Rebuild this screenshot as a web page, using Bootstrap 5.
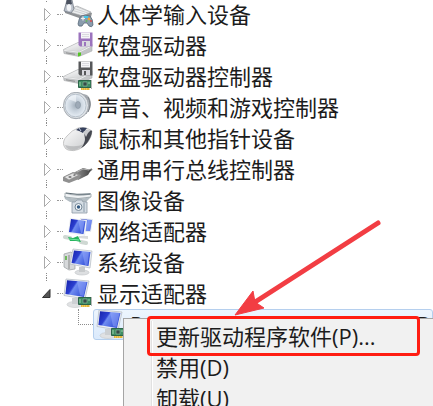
<!DOCTYPE html>
<html lang="zh-CN">
<head>
<meta charset="utf-8">
<meta name="viewport" content="width=device-width, initial-scale=1">
<title>设备管理器</title>
<link href="https://cdn.jsdelivr.net/npm/bootstrap@5.3.0/dist/css/bootstrap.min.css" rel="stylesheet">
<style>
  body { font-family: "Open Sans", "Noto Sans CJK SC", sans-serif; font-size: 22px; line-height: 31px; color: #1c1c1c; background: #fff; }
  .device-tree { margin-top: -1px; padding-left: 40px; }
  .tree-row { height: 31px; white-space: nowrap; }
  .toggle { width: 14px; height: 31px; border: 0; padding: 0; background: none; }
  .toggle::before, .toggle::after { content: ""; width: 0; border-left: 1px dotted #8c8c8c; margin-left: 6px; }
  .toggle::before { height: 3px; }
  .toggle::after { height: 5px; }
  .toggle.last-toggle::after { visibility: hidden; }
  .stub { width: 6px; margin-left: 3px; border-top: 1px dotted #9a9a9a; }
  .device-icon { width: 31px; height: 31px; overflow: visible; }
  .tree-label { margin-left: 3px; padding-bottom: 1px; }
  .elbow { width: 15px; height: 16px; margin-left: 38px; border-left: 1px dotted #8c8c8c; border-bottom: 1px dotted #8c8c8c; }
  .selected-device { border: 1px solid #b5cfee; border-radius: 3px; background: linear-gradient(#edf5fd, #dbeafc); line-height: 29px; padding-left: 2px; height: 31px; }
  .context-menu { left: 123px; right: 0; top: 318px; bottom: 0; background: #f1f1f1; border-left: 1px solid #a5a5a5; border-top: 1px solid #a5a5a5; padding: 2px 0 0 27px; }
  .menu-items { border-left: 1px solid #e1e1e1; box-shadow: inset 1px 0 #fff; }
  .menu-entry { border: 0; background: none; color: #1c1c1c; padding: 0 0 0 4px; line-height: 31px; text-align: left; white-space: nowrap; }
  .highlight-frame { left: 147px; right: 13px; top: 316px; height: 40px; border: 3px solid #ff1d12; border-radius: 4px; pointer-events: none; }
  .pointer-arrow { left: 230px; top: 215px; pointer-events: none; }
</style>
<script src="https://cdn.jsdelivr.net/npm/bootstrap@5.3.0/dist/js/bootstrap.bundle.min.js"></script>
</head>
<body class="vh-100 overflow-hidden position-relative">
<svg width="0" height="0" class="position-absolute" aria-hidden="true">
  <defs>
    <linearGradient id="screen" x1="0" y1="0" x2="1" y2=".5"><stop offset="0" stop-color="#1420a8"/><stop offset=".42" stop-color="#2b3fd0"/><stop offset=".5" stop-color="#6f8cf0"/><stop offset="1" stop-color="#3450d8"/></linearGradient>
    <linearGradient id="metal" x1="0" y1="0" x2="1" y2="1"><stop offset="0" stop-color="#fff"/><stop offset="1" stop-color="#c4c6c8"/></linearGradient>
    <linearGradient id="dark" x1="0" y1="0" x2="1" y2="0"><stop offset="0" stop-color="#9b9b9b"/><stop offset="1" stop-color="#444"/></linearGradient>
    <radialGradient id="cone"><stop offset="0" stop-color="#a3afbc"/><stop offset=".5" stop-color="#c9d3dd"/><stop offset="1" stop-color="#e6edf4"/></radialGradient>
    <symbol id="triangle" viewBox="0 0 14 16"><path d="M4.500 2.500v12l6-6z" fill="#fff" stroke="#ababab"/></symbol>
    <symbol id="triangle-open" viewBox="0 0 14 16"><path d="M10 4.500v8H2.500z" fill="#555" stroke="#333"/></symbol>
    <symbol id="board" viewBox="0 0 14 11"><path d="M3 7h8.500v3H3z" fill="#e3b63a"/><path d="M4.500 7v3m2-3v3m2-3v3" stroke="#f4d777" stroke-width=".6"/><path d="M.5.500h12.500v7H.5z" fill="#3f8c63" stroke="#2c6549"/><path d="M5 2h4v4H5z" fill="#344c47" stroke="#8ec1a1" stroke-width=".6"/><path d="M2 2v4m9-4v2" stroke="#9ed5ad"/><path d="M13.500 0v9" stroke="#b8b8b8"/></symbol>
    <symbol id="drive" viewBox="0 0 30 15"><path d="M.5 7.500 15 .5 29 2v7L16 14.500 1 11.500z" fill="#c3c5c7" stroke="#a9abad" stroke-width=".6"/><path d="M1 7.500 15 1 28.500 2.500 16 9.500z" fill="url(#metal)"/><path d="M1 8.300 16 10.300 28.500 4" fill="none" stroke="#f6f6f6" stroke-width=".8"/><path d="M3 10.800 12 12.300" stroke="#858585" stroke-width=".8"/></symbol>
    <symbol id="floppy" viewBox="0 0 15 15"><path d="M.5.500h14v14H2L.5 13z" fill="currentColor"/><path d="M3 .5h9v6H3z" fill="#f5f5f7"/><path d="M4 2.500h7M4 4.500h7" stroke="#cfcfd4" stroke-width=".7"/><path d="M4 9h8v5.500H4z" fill="#d9d9df"/><path d="M6 10h2v4H6z" fill="currentColor"/></symbol>
    <symbol id="display" viewBox="0 0 31 31"><ellipse cx="12" cy="26.500" rx="8" ry="3" fill="#e0e1e3" stroke="#c5c7c9" stroke-width=".6"/><path d="M9 20h7l1 6H9z" fill="#cdd0d3"/><path d="M3 1 26 3 22 21 1 17.500z" fill="#eef0f3" stroke="#b8bfc7" stroke-width=".8"/><path d="M4 2.300 24.500 4 21 19 2.400 16z" fill="url(#screen)"/><path d="M14 3.200 23.500 4 20.500 18 17 17.300z" fill="#9db1ff" opacity=".45"/></symbol>
    <symbol id="hid" viewBox="0 0 31 31"><path d="M2 12 14 7 29 14 28 18 19 20 2 14z" fill="#8f9295"/><path d="M3 12 14 7 28 13 20 17z" fill="#eceeef" stroke="#a3a5a8" stroke-width=".6"/><path d="M8 11 22 15M11 9.500 25 14M14 8 27 13" stroke="#b9bbbe" stroke-width=".6"/><path d="M4 1h5l2 9-3 4-7-2z" fill="#bcc2cb" stroke="#747b87" stroke-width=".8"/><path d="M4 0h4l1 5-3 1-3-1z" fill="#4b5260"/><ellipse cx="6" cy="8.500" rx="2.200" ry="3.500" fill="#f3f5f8"/><path d="M18 17q4-2 9 0 3 3 3 9-1 3-4 1l-2-3h-3l-2 3q-4 1-4-2 1-6 3-8z" fill="#8a9cad" stroke="#5a6978" stroke-width=".8"/><path d="M18 19.500h4m-2-2v4" stroke="#eee" stroke-width="1.200"/><circle cx="26" cy="20" r="1.300" fill="#f0a337"/><circle cx="28" cy="22" r="1" fill="#d84a48"/><path d="M21 17h4v2h-4z" fill="#41c7e8"/><circle cx="23.500" cy="22" r="1" fill="#67b85d"/></symbol>
    <symbol id="floppy-drive" viewBox="0 0 31 31"><use href="#drive" x="0" y="12" width="30" height="15"/><use href="#floppy" x="15" y="2" width="15" height="15" color="#9b73bd"/><path d="M15 22.500h3v3L15 26.500z" fill="#54c424"/></symbol>
    <symbol id="floppy-controller" viewBox="0 0 31 31"><use href="#drive" x="0" y="8" width="30" height="15"/><use href="#floppy" x="15" y="0" width="15" height="15" color="#57585a"/><use href="#board" x="15" y="19" width="14" height="11"/></symbol>
    <symbol id="speaker" viewBox="0 0 31 31"><path d="M14 0 24 3q4 3 4 10-1 7-6 9L16 27z" fill="#a6abb0"/><path d="M22 4q5 7 1 18M25 5q4 7 0 15" fill="none" stroke="#7b8086"/><ellipse cx="13" cy="13.500" rx="12.500" ry="13.200" fill="#dde1e5" stroke="#a3a9b0"/><ellipse cx="12.500" cy="13.500" rx="10.500" ry="11.300" fill="url(#cone)" stroke="#a5b0bb" stroke-width=".7"/><path d="M13 10 5 7q3-4 8-4z" fill="#f5f9fc" opacity=".6"/><ellipse cx="15" cy="13" rx="2.500" ry="3.500" fill="#9eaab7" stroke="#8794a0" stroke-width=".6"/></symbol>
    <symbol id="mouse" viewBox="0 0 31 31"><path d="M1 23Q-1 18 4 13 9 7 15 5q7-2 14 3 0 5-4 11-9 11-20 8-3-1-4-4z" fill="url(#metal)" stroke="#a6a6a6" stroke-width=".6"/><path d="M22 8q5-2 7 0 0 5-5 12-3 4-6 5 4-5 4-9-1-5 0-8z" fill="#454850"/><path d="M13 7 16 5q4-1 8 0l-4 5q-3-2-7-3z" fill="#36405c"/><path d="m16 5 2 3" stroke="#c4cddf"/><path d="M20 9q4-3 8-2-4 3-5 7-1-3-3-5z" fill="#c9cbcf"/><path d="M2 22q1 5 9 5 6-1 10-6-8 4-19 1z" fill="#a9aaac" opacity=".6"/></symbol>
    <symbol id="usb" viewBox="0 0 31 31"><path d="m25 18 4-3" stroke="#777" stroke-width="2"/><path d="M10 19 20 14 28 16 25 21 15 26z" fill="url(#dark)"/><path d="M0 23 10 18 18 21 16 25 6 29 0 27z" fill="#909090"/><path d="M1 23 10 19 16 21 6 26z" fill="#e2e2e2" stroke="#888" stroke-width=".6"/><path d="m5 23 2-1 2 1-2 1zm5-2 2-1 1 1-2 1z" fill="#666"/><path d="M14 18 20 15 26 16" fill="none" stroke="#b4b4b4"/></symbol>
    <symbol id="imaging" viewBox="0 0 31 31"><path d="M1 11 28 8v4l-5 5H7l-5-3z" fill="#b3bdc3"/><path d="M2 8q12 4 26 1v3Q15 15 2 12z" fill="#f0f3f5" stroke="#8a959b" stroke-width=".7"/><path d="M3 8q10 2 24 1" fill="none" stroke="#5f6d75"/><path d="M9 17h3l2-2h5l1 2h4v11H9z" fill="#d5dde4" stroke="#8e9ba5" stroke-width=".8"/><circle cx="15.500" cy="22" r="3.500" fill="#f2f5f7" stroke="#738697"/><circle cx="15.500" cy="22" r="1.700" fill="#355b83"/><path d="M21 18v9" stroke="#899aa9"/></symbol>
    <symbol id="network" viewBox="0 0 31 31"><path d="M17 2 30 3 28 16 16 16z" fill="#e5eaf0"/><path d="M18 3 29 4 27 15 18 15z" fill="url(#screen)"/><path d="M25 4 29 4 27 15 22 15z" fill="#9db1ff" opacity=".5"/><path d="M7 2 24 4 22 20 5 17z" fill="#edf0f5"/><path d="M8 3 22.500 5 20.500 18 6 16z" fill="url(#screen)"/><path d="M15 4 21.500 5 19.500 17 18 17z" fill="#9db1ff" opacity=".5"/><path d="M16 20 25 20v3l-9-1z" fill="#d9dbdc"/><path d="m2 21 5 1M18 26l5 1" stroke="#cfd8d3" stroke-width="4" stroke-linecap="round"/><path d="M5 21 10 22 15 20 18 26 13 25 7 25z" fill="#27b45e"/><path d="m6 23 10 1" stroke="#73e8a0"/></symbol>
    <symbol id="system" viewBox="0 0 31 31"><path d="M1 7 8 5 12 8v14l-6 1-5-3z" fill="#d6d8da" stroke="#999da1" stroke-width=".7"/><path d="M6 8v14" stroke="#888"/><path d="M2 9h2v4H2z" fill="#71b95d"/><ellipse cx="19" cy="25.500" rx="7" ry="2.500" fill="#dddfe1" stroke="#bec1c4" stroke-width=".6"/><path d="M16 20h6v5h-6z" fill="#c7cacc"/><path d="M10 2 29 4 27 21 7 17z" fill="#edf0f3" stroke="#b3bac2" stroke-width=".7"/><path d="M11 3.500 27.500 5 25.500 19 8.500 16z" fill="url(#screen)"/><path d="M19 4.500 26 5 24.500 18 22 18z" fill="#9db1ff" opacity=".45"/></symbol>
    <symbol id="display-adapter" viewBox="0 0 31 31"><use href="#display" width="31" height="31"/><use href="#board" x="15" y="19" width="14" height="11"/></symbol>
  </defs>
</svg>

<main>
  <ul class="device-tree list-unstyled mb-0">
    <li class="tree-row d-flex align-items-center"><button class="toggle d-flex flex-column justify-content-between" aria-label="展开 人体学输入设备"><svg width="14" height="16"><use href="#triangle"/></svg></button><span class="stub"></span><svg class="device-icon flex-shrink-0"><use href="#hid"/></svg><span class="tree-label">人体学输入设备</span></li>
    <li class="tree-row d-flex align-items-center"><button class="toggle d-flex flex-column justify-content-between" aria-label="展开 软盘驱动器"><svg width="14" height="16"><use href="#triangle"/></svg></button><span class="stub"></span><svg class="device-icon flex-shrink-0"><use href="#floppy-drive"/></svg><span class="tree-label">软盘驱动器</span></li>
    <li class="tree-row d-flex align-items-center"><button class="toggle d-flex flex-column justify-content-between" aria-label="展开 软盘驱动器控制器"><svg width="14" height="16"><use href="#triangle"/></svg></button><span class="stub"></span><svg class="device-icon flex-shrink-0"><use href="#floppy-controller"/></svg><span class="tree-label">软盘驱动器控制器</span></li>
    <li class="tree-row d-flex align-items-center"><button class="toggle d-flex flex-column justify-content-between" aria-label="展开 声音、视频和游戏控制器"><svg width="14" height="16"><use href="#triangle"/></svg></button><span class="stub"></span><svg class="device-icon flex-shrink-0"><use href="#speaker"/></svg><span class="tree-label">声音、视频和游戏控制器</span></li>
    <li class="tree-row d-flex align-items-center"><button class="toggle d-flex flex-column justify-content-between" aria-label="展开 鼠标和其他指针设备"><svg width="14" height="16"><use href="#triangle"/></svg></button><span class="stub"></span><svg class="device-icon flex-shrink-0"><use href="#mouse"/></svg><span class="tree-label">鼠标和其他指针设备</span></li>
    <li class="tree-row d-flex align-items-center"><button class="toggle d-flex flex-column justify-content-between" aria-label="展开 通用串行总线控制器"><svg width="14" height="16"><use href="#triangle"/></svg></button><span class="stub"></span><svg class="device-icon flex-shrink-0"><use href="#usb"/></svg><span class="tree-label">通用串行总线控制器</span></li>
    <li class="tree-row d-flex align-items-center"><button class="toggle d-flex flex-column justify-content-between" aria-label="展开 图像设备"><svg width="14" height="16"><use href="#triangle"/></svg></button><span class="stub"></span><svg class="device-icon flex-shrink-0"><use href="#imaging"/></svg><span class="tree-label">图像设备</span></li>
    <li class="tree-row d-flex align-items-center"><button class="toggle d-flex flex-column justify-content-between" aria-label="展开 网络适配器"><svg width="14" height="16"><use href="#triangle"/></svg></button><span class="stub"></span><svg class="device-icon flex-shrink-0"><use href="#network"/></svg><span class="tree-label">网络适配器</span></li>
    <li class="tree-row d-flex align-items-center"><button class="toggle d-flex flex-column justify-content-between" aria-label="展开 系统设备"><svg width="14" height="16"><use href="#triangle"/></svg></button><span class="stub"></span><svg class="device-icon flex-shrink-0"><use href="#system"/></svg><span class="tree-label">系统设备</span></li>
    <li>
      <div class="tree-row d-flex align-items-center"><button class="toggle last-toggle d-flex flex-column justify-content-between" aria-label="折叠 显示适配器" aria-expanded="true"><svg width="14" height="16"><use href="#triangle-open"/></svg></button><span class="stub"></span><svg class="device-icon flex-shrink-0"><use href="#display-adapter"/></svg><span class="tree-label">显示适配器</span></div>
      <ul class="list-unstyled">
        <li class="tree-row d-flex"><span class="elbow flex-shrink-0"></span><div class="selected-device d-flex align-items-center flex-grow-1 overflow-hidden"><svg class="device-icon flex-shrink-0"><use href="#display-adapter"/></svg><span class="tree-label">Parallels Display Adapter (WDDM)</span></div></li>
      </ul>
    </li>
  </ul>
</main>

<div class="context-menu position-absolute overflow-hidden">
  <div class="menu-items d-flex flex-column h-100">
    <button class="menu-entry">更新驱动程序软件(P)...</button>
    <button class="menu-entry">禁用(D)</button>
    <button class="menu-entry">卸载(U)</button>
  </div>
</div>
<svg class="pointer-arrow position-absolute" width="160" height="110" viewBox="0 0 160 110" aria-hidden="true"><path d="M148 8 22 89" stroke="#f23d43" stroke-width="5" stroke-linecap="round"/><path d="M5 100 23 76 25 87 34 93z" fill="#f23d43" stroke="#f23d43" stroke-linejoin="round"/></svg>
<div class="highlight-frame position-absolute"></div>
</body>
</html>
